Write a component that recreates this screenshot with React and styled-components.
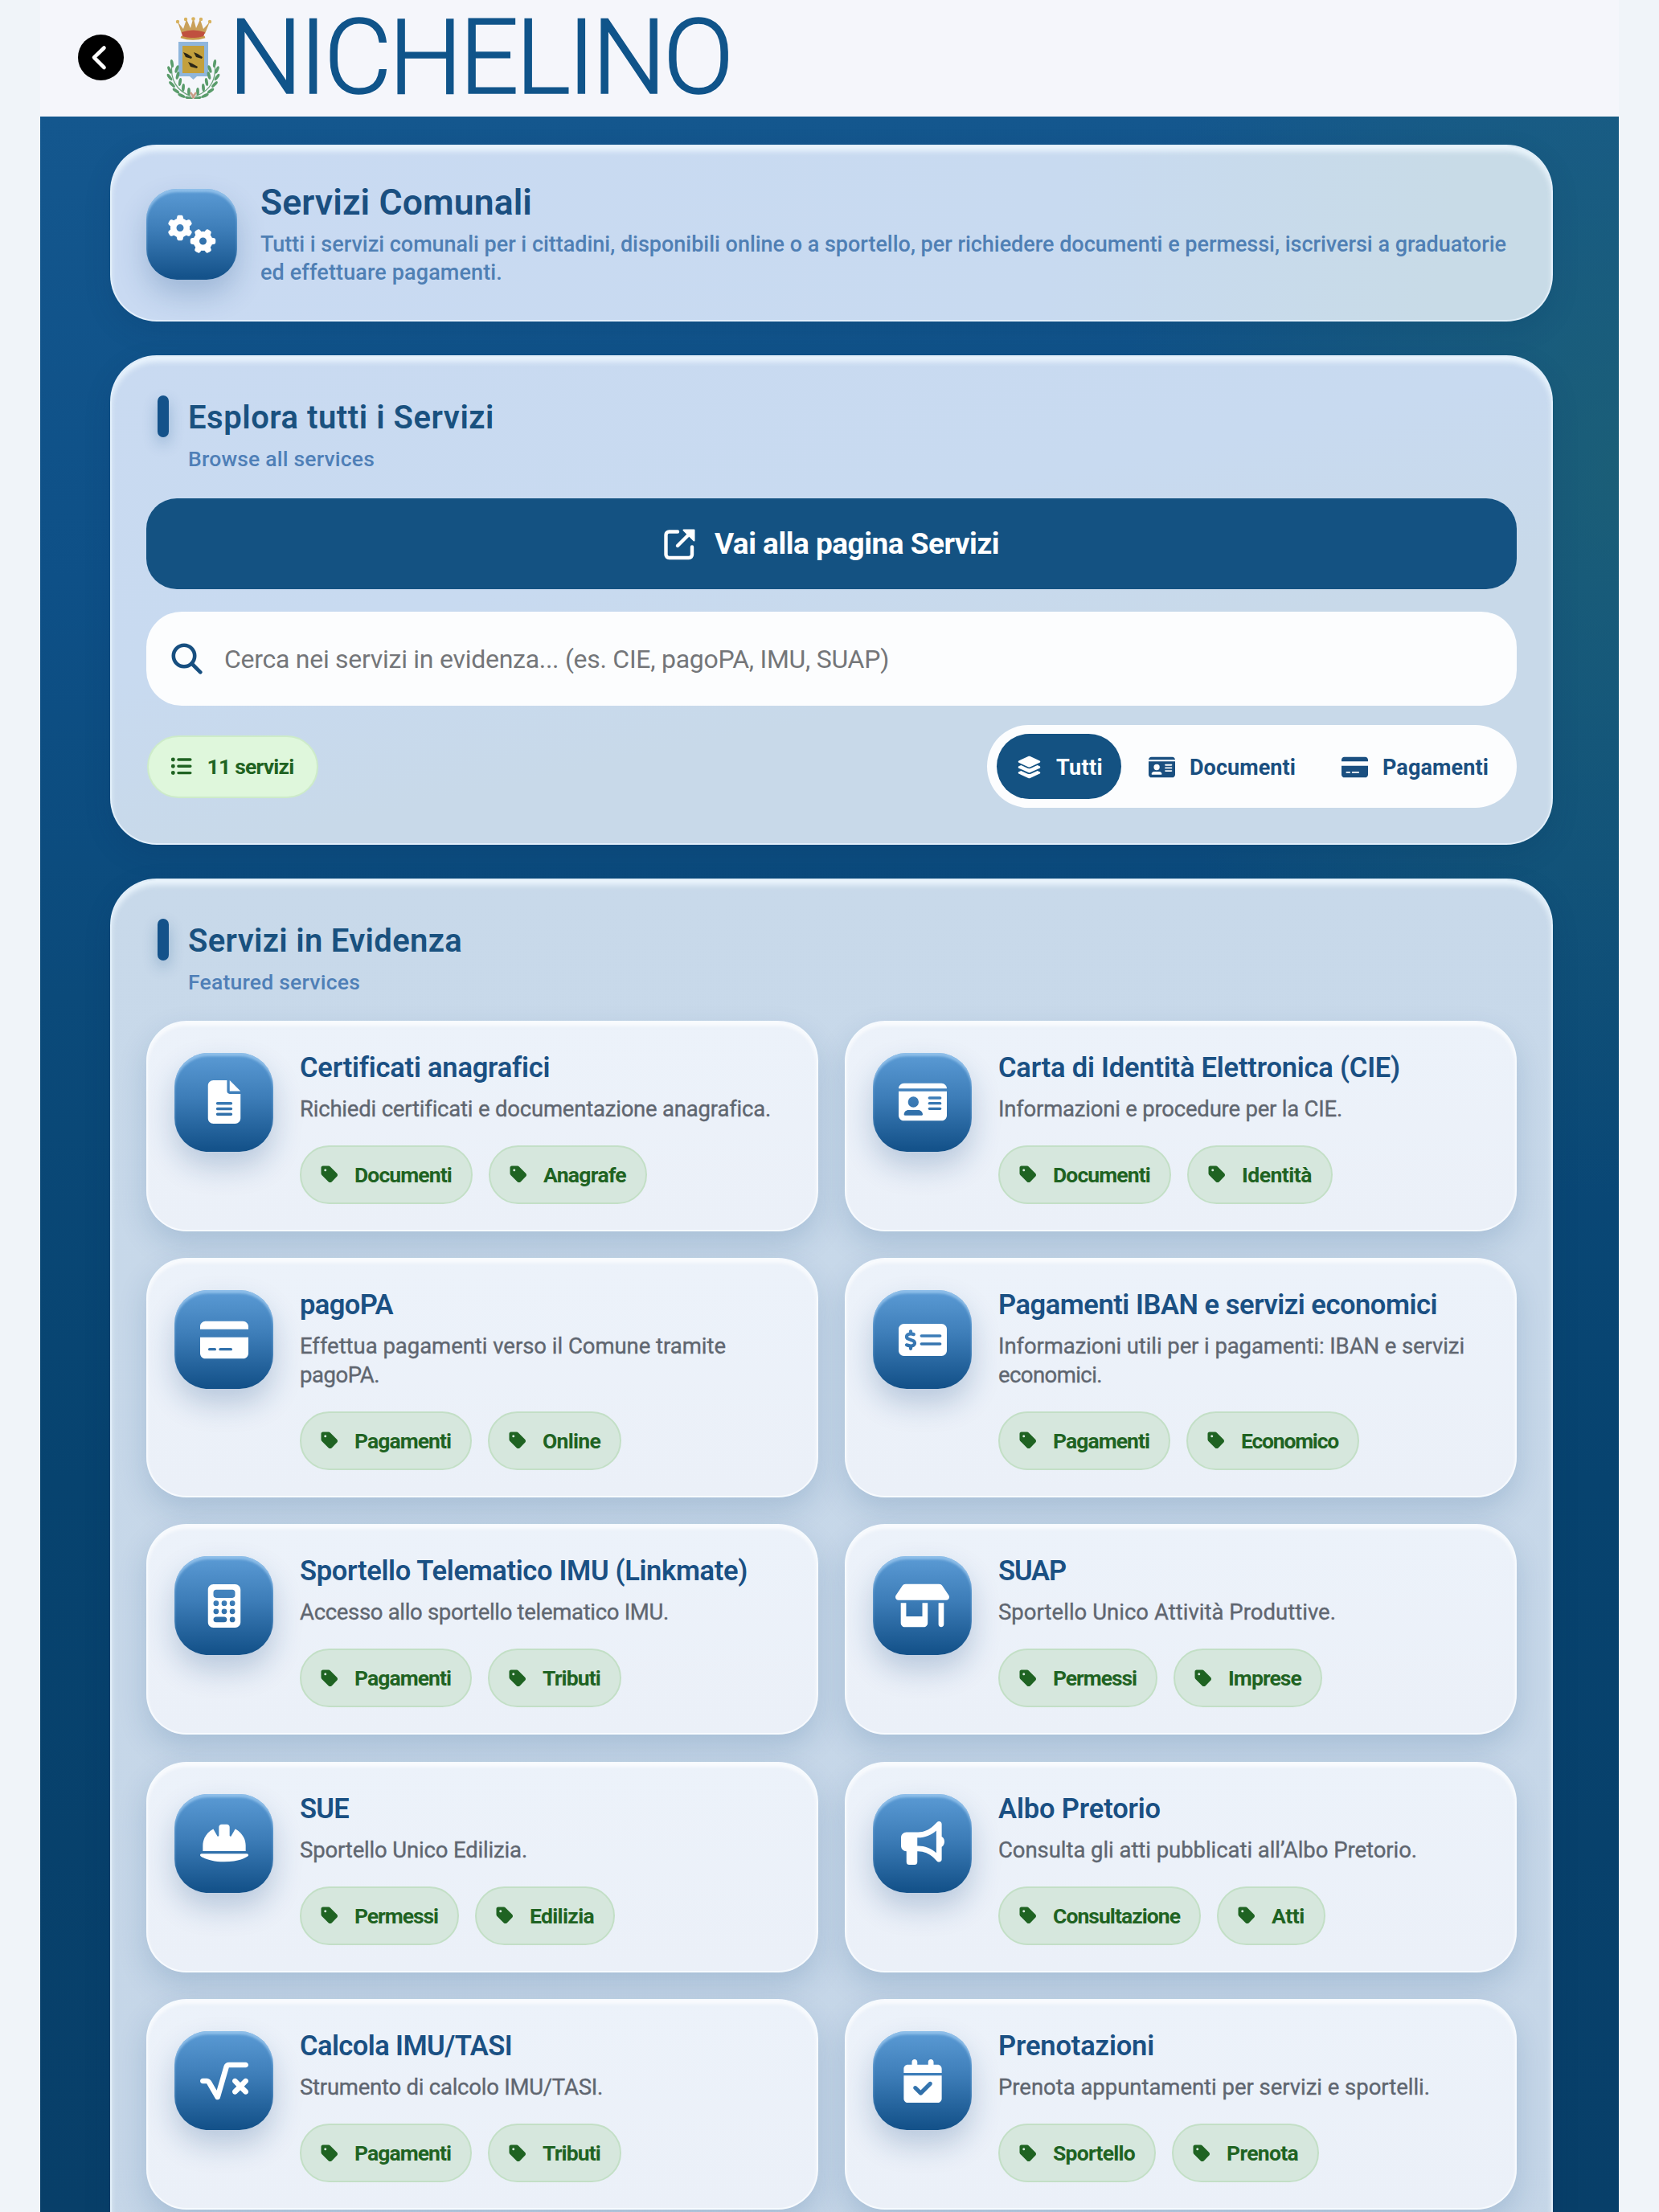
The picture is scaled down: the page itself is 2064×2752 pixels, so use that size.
import React, { useLayoutEffect, useRef, useState } from 'react';
import styled, { createGlobalStyle } from 'styled-components';
import {
  FaGears, FaFileLines, FaIdCard, FaCreditCard, FaMoneyCheckDollar, FaCalculator, FaShop,
  FaHelmetSafety, FaBullhorn, FaSquareRootVariable, FaCalendarCheck, FaTag, FaLayerGroup,
  FaListUl,
} from 'react-icons/fa6';

const Global = createGlobalStyle`
  *, *::before, *::after { box-sizing: border-box; }
  html, body { margin: 0; padding: 0; }
  body {
    background: #f0f4f9;
    font-family: Roboto, "Open Sans", "Liberation Sans", sans-serif;
    overflow: hidden;
  }
  h1, h2, h3, p { margin: 0; }
`;

const Screen = styled.div`
  height: 2752px;
  padding: 0 50px;
  overflow: hidden;
  display: flex;
  flex-direction: column;
`;

const TopBar = styled.header`
  flex: none;
  height: 145px;
  padding: 0 0 2px 47px;
  background: #f5f6fb;
  display: flex;
  align-items: center;
`;

const BackButton = styled.button`
  width: 57px;
  height: 57px;
  padding: 0;
  border: 0;
  border-radius: 50%;
  background: #000;
  display: flex;
  align-items: center;
  justify-content: center;
`;

const Brand = styled.div`
  margin-left: 52px;
  display: flex;
  align-items: center;
`;

const BrandName = styled.h1`
  margin-left: 8px;
  font-size: 130px;
  line-height: 140px;
  font-weight: 300;
  color: #10548a;
  -webkit-text-stroke: 1.6px #10548a;
`;

const Main = styled.main`
  flex: 1;
  min-height: 0;
  padding: 35px 82px 0 87px;
  display: flex;
  flex-direction: column;
  gap: 42px;
  background:
    radial-gradient(ellipse 620px 900px at 100% 17%, rgba(34, 102, 108, 0.6), rgba(34, 102, 108, 0) 100%),
    linear-gradient(180deg, #14578e 0%, #0e5087 22%, #0b4a7a 42%, #07436f 65%, #083f69 100%);
`;

const Panel = styled.section`
  flex: none;
  border-radius: 58px;
  padding: ${(p) => p.$pad};
  height: ${(p) => p.$height};
  border: 2px solid rgba(235, 246, 255, 0.75);
  background: ${(p) => p.$bg};
  box-shadow: inset 0 7px 7px -1px rgba(240, 249, 255, 0.85), 0 12px 34px rgba(4, 44, 82, 0.14);
`;

const Intro = styled(Panel)`
  display: flex;
  align-items: center;
  gap: 29px;
`;

const IconTile = styled.div`
  flex: none;
  width: ${(p) => p.$size}px;
  height: ${(p) => p.$size}px;
  border-radius: ${(p) => p.$radius}px;
  display: flex;
  align-items: center;
  justify-content: center;
  color: #fff;
  font-size: ${(p) => p.$icon}px;
  background: linear-gradient(180deg, #5b9bd5 0%, #3d7db8 45%, #14528a 97%);
  box-shadow: inset 0 4px 3px rgba(160, 203, 240, 0.75), 0 18px 36px rgba(20, 72, 130, 0.24);
  svg { display: block; }
`;

const IntroTitle = styled.h2`
  margin-top: 2px;
  font-size: 44.5px;
  line-height: 50px;
  font-weight: 650;
  color: #1a4f80;
`;

const IntroText = styled.p`
  margin-top: 10px;
  font-size: 27px;
  line-height: 35px;
  font-weight: 500;
  color: #4f7fb4;
`;

const SectionHead = styled.div`
  display: flex;
  padding-left: 14px;
  gap: 24px;
`;

const Bar = styled.span`
  width: 14px;
  height: 52px;
  border-radius: 7px;
  background: #14528a;
  box-shadow: 0 8px 18px rgba(20, 82, 138, 0.3);
`;

const SectionTitle = styled.h2`
  margin-top: 4px;
  font-size: 40px;
  line-height: 48px;
  font-weight: 650;
  color: #19517f;
`;

const SectionSub = styled.p`
  margin-top: 11px;
  font-size: 26.5px;
  line-height: 32px;
  font-weight: 500;
  color: #4f7fb7;
`;

const Primary = styled.button`
  width: 100%;
  height: 113px;
  margin-top: 33px;
  padding: 1px 0 0;
  border: 0;
  border-radius: 38px;
  background: #145282;
  color: #fff;
  font: 700 37px/44px Roboto, "Liberation Sans", sans-serif;
  display: flex;
  align-items: center;
  justify-content: center;
  gap: 23px;
`;

const SearchBox = styled.div`
  height: 117px;
  margin-top: 28px;
  padding: 0 31px;
  border-radius: 44px;
  background: #fcfdfe;
  display: flex;
  align-items: center;
  gap: 27px;
  color: #174f80;
`;

const Placeholder = styled.span`
  padding-top: 1px;
  font-size: 32px;
  line-height: 40px;
  font-weight: 400;
  color: #747679;
`;

const Toolbar = styled.div`
  margin-top: 24px;
  display: flex;
  justify-content: space-between;
  align-items: center;
`;

const Count = styled.div`
  height: 78px;
  margin-left: 1px;
  padding: 0 28px 0 27px;
  border: 2px solid #cdebc9;
  border-radius: 39px;
  background: #dff7dc;
  color: #1f6322;
  display: flex;
  align-items: center;
  gap: 19px;
  font-size: 26.5px;
  font-weight: 700;
`;

const Tabs = styled.div`
  height: 103px;
  padding: 11px 12px;
  border-radius: 52px;
  background: #fcfdfe;
  display: flex;
  gap: 9px;
`;

const Tab = styled.button`
  height: 81px;
  padding: 2px 23px 0 25px;
  border: 0;
  border-radius: 41px;
  background: ${(p) => (p.$active ? '#145282' : 'transparent')};
  color: ${(p) => (p.$active ? '#fff' : '#1a4f80')};
  font: 700 27px/32px Roboto, "Liberation Sans", sans-serif;
  display: flex;
  align-items: center;
  gap: 18px;
  svg { font-size: ${(p) => (p.$active ? 31 : 33)}px; }
`;

const Grid = styled.div`
  margin-top: 31.5px;
  display: grid;
  grid-template-columns: 1fr 1fr;
  gap: 33.5px 33px;
`;

const Card = styled.article`
  border: 2px solid rgba(250, 253, 255, 0.8);
  border-radius: 50px;
  padding: 38px 33px 32px;
  display: flex;
  align-items: flex-start;
  gap: 33px;
  background: linear-gradient(180deg, #ecf2fa 0%, #ebf0f8 100%);
  box-shadow: inset 0 4px 4px rgba(255, 255, 255, 0.7), 0 16px 36px rgba(20, 70, 125, 0.17);
`;

const CardTitle = styled.h3`
  font-size: 34.5px;
  line-height: 40px;
  margin-top: -2px;
  font-weight: 650;
  color: #1a5083;
`;

const CardText = styled.p`
  margin-top: 14px;
  font-size: 27.5px;
  line-height: 35.5px;
  font-weight: 400;
  color: #5f6670;
  -webkit-text-stroke: 0.35px #5f6670;
`;

const Chips = styled.div`
  margin-top: 27.5px;
  display: flex;
  gap: 20px;
`;

const Chip = styled.span`
  height: 73px;
  padding: 0 24px 0 23px;
  border: 2px solid #c3dfc6;
  border-radius: 37px;
  background: #d6e7dd;
  color: #1f6322;
  display: flex;
  align-items: center;
  gap: 19px;
  font-size: 26.5px;
  font-weight: 700;
  svg { font-size: 24px; }
`;

const Line = styled.span`
  display: ${(p) => (p.$block ? 'block' : 'inline-block')};
  width: ${(p) => (p.$block ? 'max-content' : 'auto')};
  white-space: pre;
`;

/* One line of text, tracked so that it fills the given width. */
function Tracked({ text, width, block }) {
  const ref = useRef(null);
  const [tracking, setTracking] = useState(0);
  useLayoutEffect(() => {
    const natural = ref.current.getBoundingClientRect().width;
    setTracking((width - natural) / text.length);
  }, [text, width]);
  return <Line ref={ref} $block={block} style={{ letterSpacing: `${tracking}px` }}>{text}</Line>;
}

function BackIcon() {
  return (
    <svg width="57" height="57" viewBox="0 0 57 57" fill="none" stroke="#fff" strokeWidth="4.600" strokeLinecap="round" strokeLinejoin="round">
      <path d="M32.500 16.500L20 28.500L32.500 41" />
    </svg>
  );
}

function SearchIcon() {
  return (
    <svg width="39" height="39" viewBox="0 0 39 39" fill="none" stroke="currentColor" strokeWidth="4.600" strokeLinecap="round">
      <circle cx="16" cy="16" r="13.200" />
      <path d="M25.500 25.500L36.300 36.300" />
    </svg>
  );
}

function OpenIcon() {
  return (
    <svg width="40" height="40" viewBox="0 0 40 40" fill="none" stroke="#fff" strokeWidth="4.400" strokeLinecap="round" strokeLinejoin="round">
      <path d="M17 4.500H6.500a4 4 0 0 0-4 4V33a4 4 0 0 0 4 4H31a4 4 0 0 0 4-4V23.500" />
      <path d="M17 22L34 5" />
      <path d="M24.500 2.500H37.500V15.500Z" fill="#fff" strokeWidth="2" />
    </svg>
  );
}

const LEAVES = [
  [8, 66, -10], [5, 74, -25], [14, 73, 20], [5, 83, -35], [15, 81, 15], [8, 92, -45], [18, 89, 10],
  [13, 100, -55], [22, 96, 5], [20, 106, -65], [29, 101, 0], [29, 109, -75],
];

function Crest() {
  return (
    <svg width="70" height="102" viewBox="0 0 70 102">
      <g transform="translate(0 -8)">
        <path d="M15 14L20 29H49L55 14L47 23L43 11L38 22L34.500 9L31 22L26 11L22 23Z" fill="#c9a05a" />
        <path d="M20 27Q34 22 49 27L47 33Q34 36 21 33Z" fill="#c0503f" />
        <path d="M19 33Q34 38 49 33" fill="none" stroke="#c79a49" strokeWidth="2.500" />
        <g fill="#d8b25e">
          <circle cx="15" cy="14" r="2.200" /><circle cx="25" cy="11" r="2.200" /><circle cx="34.500" cy="10.500" r="2.300" />
          <circle cx="44" cy="11" r="2.200" /><circle cx="55" cy="14" r="2.200" />
        </g>
        <path d="M16 39H53V82H39L34.500 86L30 82H16Z" fill="#8fb6dc" />
        <rect x="21" y="44" width="27" height="34" fill="#c3a03d" />
        <g fill="#2b2718">
          <path d="M22 52l5 2 6 4-1 2-7-2z" /><path d="M35 52l5 2 6 4-1 2-7-2z" /><path d="M28 64l5 2 7 4-1 2-8-2z" />
        </g>
        {[false, true].map((flip) => (
          <g key={String(flip)} transform={flip ? 'translate(69 0) scale(-1 1)' : undefined}>
            <path d="M8 66Q4 96 32 107" fill="none" stroke="#6aa277" strokeWidth="1.200" />
            {LEAVES.map(([x, y, r]) => (
              <ellipse key={`${x}-${y}`} cx={x} cy={y} rx="1.900" ry="5" fill="#5a9c6b" transform={`rotate(${r} ${x} ${y})`} />
            ))}
          </g>
        ))}
        <path d="M31 102L36 109M38 102L33 109" stroke="#c99c86" strokeWidth="2.500" />
      </g>
    </svg>
  );
}

const SERVICES = [
  { icon: FaFileLines, size: 54, title: ['Certificati anagrafici', 310], lines: [['Richiedi certificati e documentazione anagrafica.', 584]], tags: [['Documenti', 121], ['Anagrafe', 103]] },
  { icon: FaIdCard, size: 60, title: ['Carta di Identità Elettronica (CIE)', 500], lines: [['Informazioni e procedure per la CIE.', 428]], tags: [['Documenti', 121], ['Identità', 87]] },
  { icon: FaCreditCard, size: 60, title: ['pagoPA', 116], lines: [['Effettua pagamenti verso il Comune tramite', 530], ['pagoPA.', 99]], tags: [['Pagamenti', 120], ['Online', 72]] },
  { icon: FaMoneyCheckDollar, size: 60, title: ['Pagamenti IBAN e servizi economici', 546], lines: [['Informazioni utili per i pagamenti: IBAN e servizi', 580], ['economici.', 129]], tags: [['Pagamenti', 120], ['Economico', 121]] },
  { icon: FaCalculator, size: 54, title: ['Sportello Telematico IMU (Linkmate)', 557], lines: [['Accesso allo sportello telematico IMU.', 459]], tags: [['Pagamenti', 120], ['Tributi', 72]] },
  { icon: FaShop, size: 67, title: ['SUAP', 84], lines: [['Sportello Unico Attività Produttive.', 420]], tags: [['Permessi', 104], ['Imprese', 91]] },
  { icon: FaHelmetSafety, size: 60, title: ['SUE', 61], lines: [['Sportello Unico Edilizia.', 283]], tags: [['Permessi', 104], ['Edilizia', 80]] },
  { icon: FaBullhorn, size: 54, title: ['Albo Pretorio', 202], lines: [['Consulta gli atti pubblicati all’Albo Pretorio.', 521]], tags: [['Consultazione', 158], ['Atti', 41]] },
  { icon: FaSquareRootVariable, size: 60, title: ['Calcola IMU/TASI', 264], lines: [['Strumento di calcolo IMU/TASI.', 377]], tags: [['Pagamenti', 120], ['Tributi', 72]] },
  { icon: FaCalendarCheck, size: 54, title: ['Prenotazioni', 194], lines: [['Prenota appuntamenti per servizi e sportelli.', 537]], tags: [['Sportello', 102], ['Prenota', 89]] },
];

function ServiceCard({ icon: Icon, size, title, lines, tags }) {
  return (
    <Card>
      <IconTile $size={123} $radius={42} $icon={size}><Icon /></IconTile>
      <div>
        <CardTitle><Tracked text={title[0]} width={title[1]} block /></CardTitle>
        <CardText>
          {lines.map(([text, width]) => <Tracked key={text} text={text} width={width} block />)}
        </CardText>
        <Chips>
          {tags.map(([text, width]) => (
            <Chip key={text}><FaTag /><Tracked text={text} width={width} /></Chip>
          ))}
        </Chips>
      </div>
    </Card>
  );
}

export default function App() {
  return (
    <>
      <Global />
      <Screen>
        <TopBar>
          <BackButton aria-label="Indietro"><BackIcon /></BackButton>
          <Brand>
            <Crest />
            <BrandName><Tracked text="NICHELINO" width={625} /></BrandName>
          </Brand>
        </TopBar>
        <Main>
          <Intro $height="220px" $pad="2px 43px 0" $bg="linear-gradient(100deg, #c9daf2 0%, #c8daf0 65%, #c8dbe7 92%)">
            <IconTile $size={113} $radius={38} $icon={60}><FaGears /></IconTile>
            <div>
              <IntroTitle><Tracked text="Servizi Comunali" width={338} block /></IntroTitle>
              <IntroText>
                <Tracked text="Tutti i servizi comunali per i cittadini, disponibili online o a sportello, per richiedere documenti e permessi, iscriversi a graduatorie" width={1550} block />
                <Tracked text="ed effettuare pagamenti." width={301} block />
              </IntroText>
            </div>
          </Intro>

          <Panel $height="609px" $pad="48px 43px 0" $bg="linear-gradient(168deg, #c9daf1 0%, #c8daf0 40%, #c8d9e9 65%, #c8d9e9 100%)">
            <SectionHead>
              <Bar />
              <div>
                <SectionTitle><Tracked text="Esplora tutti i Servizi" width={381} block /></SectionTitle>
                <SectionSub><Tracked text="Browse all services" width={232} block /></SectionSub>
              </div>
            </SectionHead>
            <Primary><OpenIcon /><Tracked text="Vai alla pagina Servizi" width={354} /></Primary>
            <SearchBox>
              <SearchIcon />
              <Placeholder><Tracked text="Cerca nei servizi in evidenza... (es. CIE, pagoPA, IMU, SUAP)" width={827} /></Placeholder>
            </SearchBox>
            <Toolbar>
              <Count><FaListUl /><Tracked text="11 servizi" width={108} /></Count>
              <Tabs>
                <Tab $active><FaLayerGroup /><Tracked text="Tutti" width={58} /></Tab>
                <Tab><FaIdCard /><Tracked text="Documenti" width={132} /></Tab>
                <Tab><FaCreditCard /><Tracked text="Pagamenti" width={132} /></Tab>
              </Tabs>
            </Toolbar>
          </Panel>

          <Panel $height="2000px" $pad="48px 43px 0" $bg="linear-gradient(180deg, #c8d9ea 0%, #c4d5e7 100%)">
            <SectionHead>
              <Bar />
              <div>
                <SectionTitle><Tracked text="Servizi in Evidenza" width={341} block /></SectionTitle>
                <SectionSub><Tracked text="Featured services" width={214} block /></SectionSub>
              </div>
            </SectionHead>
            <Grid>
              {SERVICES.map((s) => <ServiceCard key={s.title[0]} {...s} />)}
            </Grid>
          </Panel>
        </Main>
      </Screen>
    </>
  );
}
